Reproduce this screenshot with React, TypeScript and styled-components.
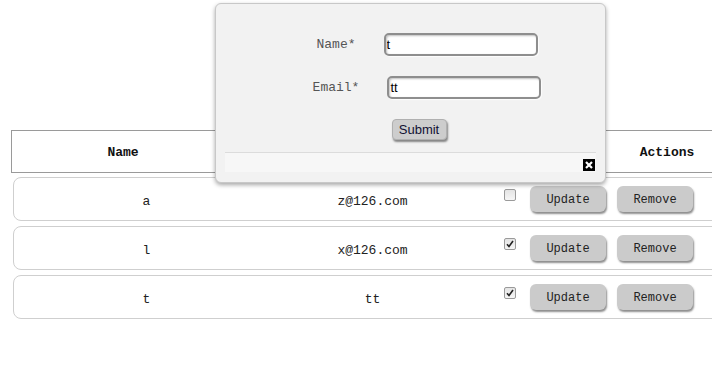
import React from "react";
import styled, { createGlobalStyle } from "styled-components";

const Global = createGlobalStyle`
  html, body { margin: 0; padding: 0; overflow: hidden; background: #fff; }
  body { font-family: "Liberation Mono", monospace; }
`;

const Page = styled.div`
  position: relative;
  width: 712px;
  height: 375px;
  padding: 130px 0 0 11px;
  box-sizing: border-box;
`;

const HeaderBar = styled.div`
  display: grid;
  grid-template-columns: 222px 1fr 110px;
  width: 712px;
  height: 43px;
  box-sizing: border-box;
  border: 1px solid #9a9a9a;
  align-items: center;
`;

const HeadCell = styled.div`
  text-align: center;
  font-family: "Liberation Mono", monospace;
  font-weight: bold;
  font-size: 13px;
  color: #111;
  padding-top: 2px;
`;

const Rows = styled.div`
  display: flex;
  flex-direction: column;
  gap: 5px;
  margin: 4px 0 0 2px;
`;

const Row = styled.div`
  display: flex;
  align-items: center;
  width: 730px;
  height: 44px;
  box-sizing: border-box;
  border: 1px solid #cfcfcf;
  border-radius: 8px;
`;

const Cell = styled.div<{ $w: number }>`
  width: ${(p) => p.$w}px;
  text-align: center;
  font-family: "Liberation Mono", monospace;
  font-size: 13px;
  color: #222;
  padding-top: 4px;
`;

const Check = styled.span`
  align-self: flex-start;
  margin: 11px 14px 0 38px;
  width: 12px;
  height: 12px;
  box-sizing: border-box;
  border: 1px solid #9a9a9a;
  border-radius: 2px;
  background: linear-gradient(#e4e4e4, #f6f6f6);
  display: flex;
  align-items: center;
  justify-content: center;
`;

const RowButton = styled.button<{ $gap?: number }>`
  width: 76px;
  height: 26px;
  margin-left: ${(p) => p.$gap ?? 0}px;
  padding: 2px 0 0;
  border: none;
  border-radius: 6px;
  background: #cbcbcb;
  box-shadow: 1px 2px 2px rgba(0, 0, 0, 0.45);
  font-family: "Liberation Mono", monospace;
  font-size: 12px;
  color: #222;
`;

const Modal = styled.div`
  position: absolute;
  left: 215px;
  top: 3px;
  width: 391px;
  height: 180px;
  box-sizing: border-box;
  background: #f2f2f2;
  border: 1px solid #c8c8c8;
  border-radius: 6px;
  box-shadow: 0 2px 4px rgba(0, 0, 0, 0.35);
  padding: 0 9px 10px 9px;
  display: flex;
  flex-direction: column;
`;

const Form = styled.div`
  display: flex;
  flex-direction: column;
  align-items: center;
  gap: 20px;
  padding: 29px 0 12px 33px;
`;

const FormRow = styled.div`
  display: flex;
  align-items: center;
  height: 23px;
`;

const Label = styled.label`
  font-family: "Liberation Mono", monospace;
  font-size: 13px;
  color: #555;
  margin-right: 28px;
`;

const Input = styled.input`
  width: 154px;
  height: 23px;
  box-sizing: border-box;
  border: 2px solid #8e8e8e;
  border-radius: 5px;
  background: #fff;
  padding: 0 1px;
  font-family: "Liberation Sans", Arial, sans-serif;
  font-size: 13px;
  color: #000;
  box-shadow: inset 1px 1px 2px rgba(0, 0, 0, 0.25), 1px 1px 1px rgba(255, 255, 255, 0.8);
  outline: none;
`;

const Submit = styled.button`
  width: 55px;
  height: 21px;
  margin-right: 16px;
  padding: 0;
  border: 1px solid #b0b0b0;
  border-radius: 4px;
  background: #cdcdcd;
  box-shadow: 1px 2px 2px rgba(0, 0, 0, 0.45);
  font-family: "Liberation Sans", Arial, sans-serif;
  font-size: 13px;
  color: #111133;
`;

const Footer = styled.div`
  height: 20px;
  border-top: 1px solid #dcdcdc;
  background: #f7f7f7;
  display: flex;
  justify-content: flex-end;
  align-items: flex-end;
  padding: 0 1px 1px 0;
`;

const CloseIcon = () => (
  <svg width="12" height="12" viewBox="0 0 12 12">
    <rect width="12" height="12" fill="#000" />
    <path d="M3 3 L9 9 M9 3 L3 9" stroke="#fff" strokeWidth="2.2" />
  </svg>
);

const CheckMark = () => (
  <svg width="8" height="8" viewBox="0 0 8 8">
    <path d="M1 4.2 L3 6.5 L7 1" stroke="#222" strokeWidth="1.6" fill="none" />
  </svg>
);

const data = [
  { name: "a", email: "z@126.com", checked: false },
  { name: "l", email: "x@126.com", checked: true },
  { name: "t", email: "tt", checked: true },
];

export default function App() {
  return (
    <>
      <Global />
      <Page>
        <HeaderBar>
          <HeadCell>Name</HeadCell>
          <HeadCell>Email</HeadCell>
          <HeadCell>Actions</HeadCell>
        </HeaderBar>
        <Rows>
          {data.map((d) => (
            <Row key={d.name}>
              <Cell $w={265}>{d.name}</Cell>
              <Cell $w={187}>{d.email}</Cell>
              <Check>{d.checked && <CheckMark />}</Check>
              <RowButton>Update</RowButton>
              <RowButton $gap={11}>Remove</RowButton>
            </Row>
          ))}
        </Rows>
        <Modal>
          <Form>
            <FormRow>
              <Label>Name*</Label>
              <Input defaultValue="t" />
            </FormRow>
            <FormRow>
              <Label>Email*</Label>
              <Input defaultValue="tt" />
            </FormRow>
            <Submit>Submit</Submit>
          </Form>
          <Footer>
            <CloseIcon />
          </Footer>
        </Modal>
      </Page>
    </>
  );
}
